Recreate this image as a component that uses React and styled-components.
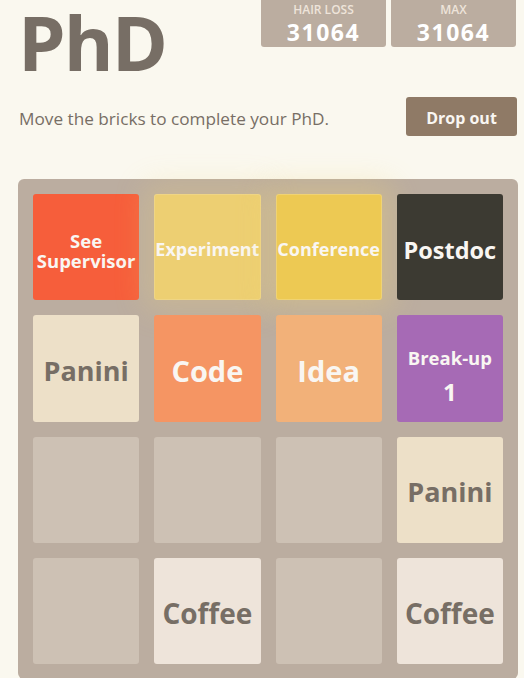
import React from "react";
import styled, { createGlobalStyle } from "styled-components";

const GlobalStyle = createGlobalStyle`
  html, body {
    margin: 0;
    padding: 0;
    background: #faf8ef;
  }
  body {
    font-family: "Open Sans", "Noto Sans", "Liberation Sans", sans-serif;
    color: #776e65;
    overflow: hidden;
  }
`;

const Container = styled.div`
  width: 500px;
  margin-left: 18px;
`;

const Heading = styled.div`
  display: flex;
  justify-content: space-between;
  align-items: flex-start;
`;

const Title = styled.h1`
  margin: -10px 0 0 0;
  font-size: 76px;
  line-height: 104px;
  font-weight: 700;
  letter-spacing: -2px;
  color: #776e65;
`;

const Scores = styled.div`
  display: flex;
  gap: 5px;
  margin-right: 2px;
`;

const ScoreBox = styled.div`
  width: 125px;
  box-sizing: border-box;
  padding-top: 1px;
  background: #bbada0;
  border-radius: 0 0 3px 3px;
  text-align: center;
  color: #fff;
`;

const ScoreLabel = styled.div`
  font-size: 12px;
  line-height: 17px;
  font-weight: 600;
  color: #eee4da;
`;

const ScoreValue = styled.div`
  font-size: 23px;
  line-height: 29px;
  font-weight: 700;
  letter-spacing: 1.5px;
`;

const Intro = styled.div`
  display: flex;
  justify-content: space-between;
  align-items: center;
  margin-top: 3px;
`;

const IntroText = styled.p`
  margin: 4px 0 0 1px;
  font-size: 17.2px;
  line-height: 24px;
  color: #776e65;
`;

const DropButton = styled.button`
  width: 111px;
  height: 39px;
  margin-right: 1px;
  border: none;
  border-radius: 3px;
  background: #8f7a66;
  color: #f9f6f2;
  font-family: inherit;
  font-size: 16px;
  font-weight: 700;
  padding: 2px 0 0;
`;

const Board = styled.div`
  margin-top: 43px;
  width: 500px;
  height: 500px;
  box-sizing: border-box;
  padding: 15px;
  background: #bbada0;
  border-radius: 6px;
  display: grid;
  grid-template-columns: repeat(4, 1fr);
  grid-template-rows: repeat(4, 1fr);
  gap: 15px;
`;

const Tile = styled.div`
  box-sizing: border-box;
  padding-top: ${(p) => p.pad || 6}px;
  border-radius: 3px;
  background: ${(p) => p.bg};
  color: ${(p) => p.fg || "#f9f6f2"};
  font-size: ${(p) => p.size}px;
  line-height: ${(p) => p.lh || 1.2};
  font-weight: 700;
  display: flex;
  flex-direction: column;
  align-items: center;
  justify-content: center;
  text-align: center;
  white-space: nowrap;
  box-shadow: ${(p) => p.glow || "none"};
`;

const Empty = styled.div`
  border-radius: 3px;
  background: #cdc1b4;
`;

const Count = styled.span`
  font-size: 24px;
  line-height: 30px;
  margin-top: 8px;
`;

const dark = "#776e65";

const tiles = [
  { text: ["See", "Supervisor"], bg: "#f65e3b", size: 18.5, lh: 1.1, pad: 8 },
  {
    text: ["Experiment"],
    bg: "#edcf72",
    size: 18,
    glow: "0 0 30px 10px rgba(243, 215, 116, 0.24), inset 0 0 0 1px rgba(255, 255, 255, 0.14)",
  },
  {
    text: ["Conference"],
    bg: "#edc953",
    size: 18,
    glow: "0 0 30px 10px rgba(243, 215, 116, 0.32), inset 0 0 0 1px rgba(255, 255, 255, 0.19)",
  },
  { text: ["Postdoc"], bg: "#3c3a32", size: 23.5 },
  { text: ["Panini"], bg: "#ede0c8", fg: dark, size: 27 },
  { text: ["Code"], bg: "#f59563", size: 29 },
  { text: ["Idea"], bg: "#f2b179", size: 29 },
  { text: ["Break-up"], bg: "#a66ab5", size: 18.5, count: 1, pad: 18 },
  null,
  null,
  null,
  { text: ["Panini"], bg: "#ede0c8", fg: dark, size: 27 },
  null,
  { text: ["Coffee"], bg: "#eee4da", fg: dark, size: 28 },
  null,
  { text: ["Coffee"], bg: "#eee4da", fg: dark, size: 28 },
];

const App = () => (
  <>
    <GlobalStyle />
    <Container>
      <Heading>
        <Title>PhD</Title>
        <Scores>
          <ScoreBox>
            <ScoreLabel>HAIR LOSS</ScoreLabel>
            <ScoreValue>31064</ScoreValue>
          </ScoreBox>
          <ScoreBox>
            <ScoreLabel>MAX</ScoreLabel>
            <ScoreValue>31064</ScoreValue>
          </ScoreBox>
        </Scores>
      </Heading>
      <Intro>
        <IntroText>Move the bricks to complete your PhD.</IntroText>
        <DropButton>Drop out</DropButton>
      </Intro>
      <Board>
        {tiles.map((t, i) =>
          t ? (
            <Tile key={i} bg={t.bg} fg={t.fg} size={t.size} lh={t.lh} glow={t.glow} pad={t.pad}>
              <span>
                {t.text.map((line, j) => (
                  <React.Fragment key={j}>
                    {j > 0 && <br />}
                    {line}
                  </React.Fragment>
                ))}
              </span>
              {t.count && <Count>{t.count}</Count>}
            </Tile>
          ) : (
            <Empty key={i} />
          )
        )}
      </Board>
    </Container>
  </>
);

export default App;
